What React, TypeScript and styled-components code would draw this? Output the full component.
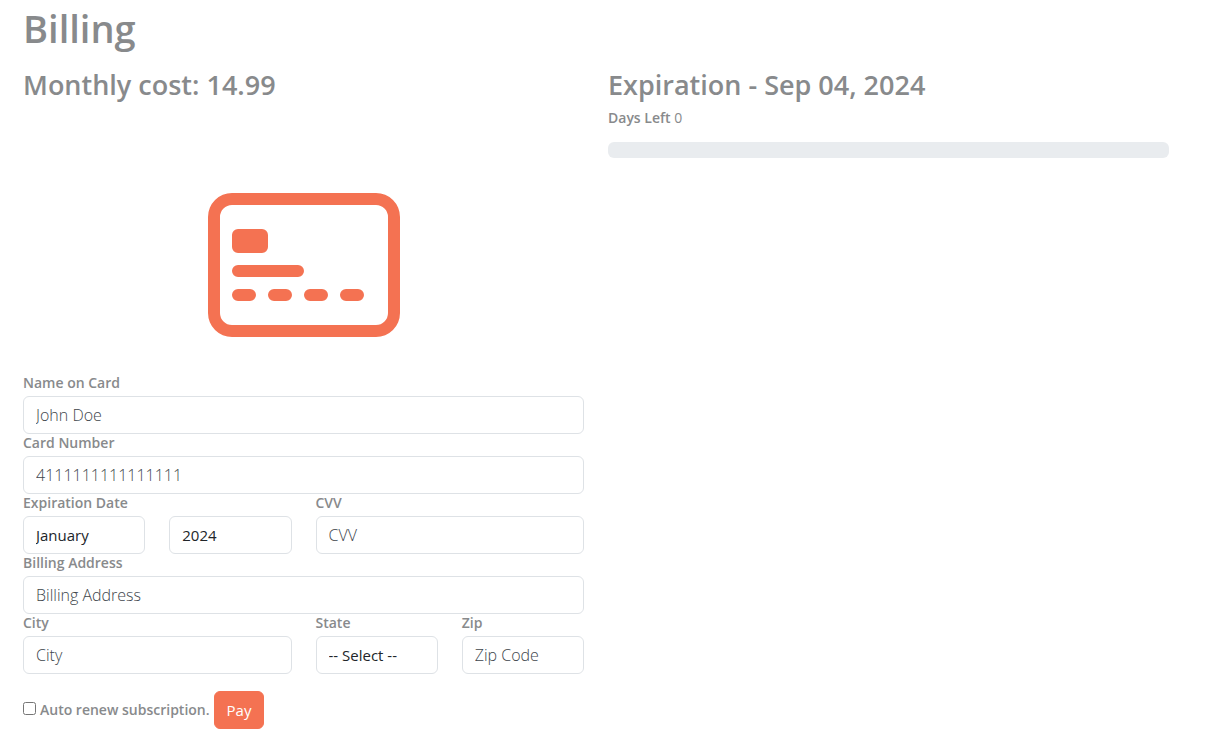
import React from "react";
import styled, { createGlobalStyle, css } from "styled-components";

const GlobalStyle = createGlobalStyle`
  *, *::before, *::after { box-sizing: border-box; }
  body {
    margin: 0;
    background: #fff;
    color: #888a8c;
    font-family: "Segoe UI", "Open Sans", "Noto Sans", sans-serif;
    font-size: 14px;
    font-weight: 400;
    line-height: 20px;
  }
`;

const Page = styled.main`
  padding: 3px 51px 12px 23px;
`;

const Title = styled.h1`
  margin: 0 0 12px;
  font-size: 38px;
  font-weight: 600;
  line-height: 50px;
`;

const Subtitle = styled.h2`
  margin: 0 0 3px;
  font-size: 27px;
  font-weight: 600;
  line-height: 40px;
`;

const Columns = styled.div`
  display: grid;
  grid-template-columns: repeat(2, minmax(0, 1fr));
  gap: 24px;
`;

const Strong = styled.strong`
  font-weight: 600;
`;

const Track = styled.div`
  height: 16px;
  margin-top: 14px;
  border-radius: 6px;
  background: #e9ecef;
`;

const CardArt = styled.svg`
  display: block;
  width: 192px;
  height: 192px;
  margin: 64px auto 13px;
  fill: #f47252;
`;

const FormGrid = styled.div`
  display: grid;
  grid-template-columns: repeat(4, minmax(0, 1fr));
  column-gap: 24px;
`;

const Field = styled.div<{ $span: number }>`
  display: flex;
  flex-direction: column;
  justify-content: flex-end;
  grid-column: span ${(p) => p.$span};
`;

const Label = styled.label`
  margin-bottom: 4px;
  font-weight: 600;
  line-height: 18px;
`;

const control = css`
  width: 100%;
  height: 38px;
  padding: 0 12px;
  border: 1px solid #dee2e6;
  border-radius: 6px;
  background: #fff;
  color: #212529;
  font-family: inherit;
  line-height: 24px;
`;

const Input = styled.input`
  ${control}
  font-size: 16px;
  font-weight: 300;
  &::placeholder { color: #40464c; opacity: 1; }
`;

const Select = styled.select`
  ${control}
  appearance: none;
  font-size: 15px;
  font-weight: 400;
`;

const Actions = styled.div`
  display: flex;
  align-items: center;
  gap: 4px;
  margin-top: 17px;
`;

const Checkbox = styled.input`
  width: 13px;
  height: 13px;
  margin: 0 0 4px;
`;

const RenewLabel = styled.label`
  font-weight: 600;
`;

const PayButton = styled.button`
  height: 38px;
  padding: 0 12px;
  border: 1px solid #f47252;
  border-radius: 6px;
  background: #f47252;
  color: #fff;
  font-family: inherit;
  font-size: 15px;
  font-weight: 400;
  line-height: 24px;
`;

type TextFieldProps = { id: string; label: string; placeholder: string; span: number };

const TextField = ({ id, label, placeholder, span }: TextFieldProps) => (
  <Field $span={span}>
    <Label htmlFor={id}>{label}</Label>
    <Input id={id} type="text" placeholder={placeholder} />
  </Field>
);

export default function App() {
  return (
    <Page>
      <GlobalStyle />
      <Title>Billing</Title>
      <Columns>
        <section>
          <Subtitle>Monthly cost: 14.99</Subtitle>
          <CardArt viewBox="0 0 16 16" aria-hidden="true">
            <path d="M14 3a1 1 0 0 1 1 1v8a1 1 0 0 1-1 1H2a1 1 0 0 1-1-1V4a1 1 0 0 1 1-1zM2 2a2 2 0 0 0-2 2v8a2 2 0 0 0 2 2h12a2 2 0 0 0 2-2V4a2 2 0 0 0-2-2z" />
            <path d="M2 5.5a.5.5 0 0 1 .5-.5h2a.5.5 0 0 1 .5.5v1a.5.5 0 0 1-.5.5h-2a.5.5 0 0 1-.5-.5zm0 3a.5.5 0 0 1 .5-.5h5a.5.5 0 0 1 0 1h-5a.5.5 0 0 1-.5-.5m0 2a.5.5 0 0 1 .5-.5h1a.5.5 0 0 1 0 1h-1a.5.5 0 0 1-.5-.5m3 0a.5.5 0 0 1 .5-.5h1a.5.5 0 0 1 0 1h-1a.5.5 0 0 1-.5-.5m3 0a.5.5 0 0 1 .5-.5h1a.5.5 0 0 1 0 1h-1a.5.5 0 0 1-.5-.5m3 0a.5.5 0 0 1 .5-.5h1a.5.5 0 0 1 0 1h-1a.5.5 0 0 1-.5-.5" />
          </CardArt>
          <form onSubmit={(e) => e.preventDefault()}>
            <FormGrid>
              <TextField id="name" label="Name on Card" placeholder="John Doe" span={4} />
              <TextField id="number" label="Card Number" placeholder="4111111111111111" span={4} />
              <Field $span={1}>
                <Label htmlFor="month">Expiration Date</Label>
                <Select id="month">
                  <option>January</option>
                </Select>
              </Field>
              <Field $span={1}>
                <Select aria-label="Expiration year">
                  <option>2024</option>
                </Select>
              </Field>
              <TextField id="cvv" label="CVV" placeholder="CVV" span={2} />
              <TextField id="address" label="Billing Address" placeholder="Billing Address" span={4} />
              <TextField id="city" label="City" placeholder="City" span={2} />
              <Field $span={1}>
                <Label htmlFor="state">State</Label>
                <Select id="state">
                  <option>-- Select --</option>
                </Select>
              </Field>
              <TextField id="zip" label="Zip" placeholder="Zip Code" span={1} />
            </FormGrid>
            <Actions>
              <Checkbox id="renew" type="checkbox" />
              <RenewLabel htmlFor="renew">Auto renew subscription.</RenewLabel>
              <PayButton type="submit">Pay</PayButton>
            </Actions>
          </form>
        </section>
        <section>
          <Subtitle>Expiration - Sep 04, 2024</Subtitle>
          <div>
            <Strong>Days Left</Strong> 0
          </div>
          <Track role="progressbar" aria-label="Days left" aria-valuenow={0} />
        </section>
      </Columns>
    </Page>
  );
}
